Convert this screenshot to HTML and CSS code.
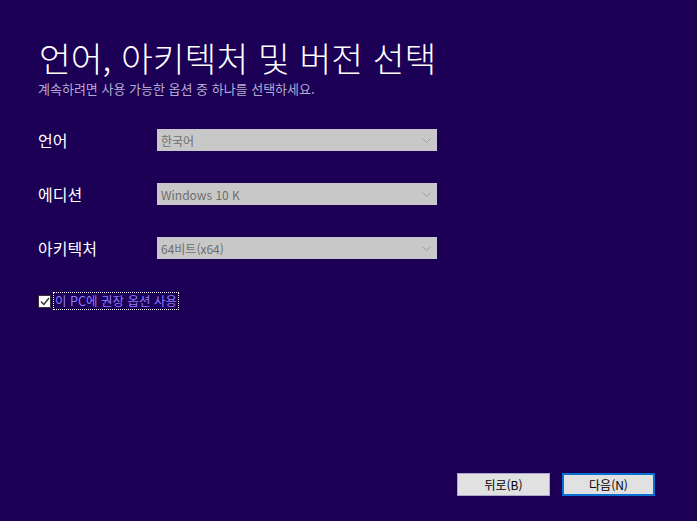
FILE: index.html
```html
<!DOCTYPE html>
<html lang="ko">
<head>
    <meta charset="UTF-8">
    <title>Windows 10 설치 프로그램</title>
    <link rel="stylesheet" href="styles.css">
</head>
<body>
    <div class="page">
        <div class="header">
            <h1>언어, 아키텍처 및 버전 선택</h1>
            <p class="subtitle">계속하려면 사용 가능한 옵션 중 하나를 선택하세요.</p>
        </div>
        <div class="options">
            <div class="row">
                <span class="label">언어</span>
                <div class="select"><span>한국어</span><svg class="chev" width="9" height="5" viewBox="0 0 9 5"><path d="M0.5 0.5 L4.5 4.5 L8.5 0.5" fill="none" stroke="#9e9e9e" stroke-width="1"/></svg></div>
            </div>
            <div class="row">
                <span class="label">에디션</span>
                <div class="select"><span>Windows 10 K</span><svg class="chev" width="9" height="5" viewBox="0 0 9 5"><path d="M0.5 0.5 L4.5 4.5 L8.5 0.5" fill="none" stroke="#9e9e9e" stroke-width="1"/></svg></div>
            </div>
            <div class="row">
                <span class="label">아키텍처</span>
                <div class="select"><span>64비트(x64)</span><svg class="chev" width="9" height="5" viewBox="0 0 9 5"><path d="M0.5 0.5 L4.5 4.5 L8.5 0.5" fill="none" stroke="#9e9e9e" stroke-width="1"/></svg></div>
            </div>
        </div>
        <div class="check-row">
            <span class="checkbox"><svg width="10" height="9" viewBox="0 0 10 9"><path d="M1 4.5 L3.8 7.5 L9 1" fill="none" stroke="#333" stroke-width="1.4"/></svg></span>
            <span class="check-label">이 PC에 권장 옵션 사용</span>
        </div>
        <div class="footer">
            <button class="btn">뒤로(B)</button>
            <button class="btn btn-default">다음(N)</button>
        </div>
    </div>
</body>
</html>
```

FILE: styles.css
```css
html, body { margin: 0; height: 100%; }
body {
    background-color: #1b0056;
    color: #ffffff;
    font-family: "Noto Sans CJK KR", "Noto Sans", sans-serif;
}
.page {
    height: 100%;
    box-sizing: border-box;
    display: flex;
    flex-direction: column;
    padding: 37px 42px 25px 38px;
}
h1 {
    margin: 0 0 0 1px;
    font-size: 34.6px;
    font-weight: 300;
    line-height: 40px;
    letter-spacing: 0;
}
.subtitle {
    margin: 3px 0 0 0;
    font-size: 13px;
    line-height: 17px;
    color: #b4acd0;
}
.options {
    margin-top: 31px;
    display: flex;
    flex-direction: column;
    gap: 32px;
}
.row {
    display: grid;
    grid-template-columns: 119px 280px;
    align-items: center;
    height: 22px;
}
.label { font-size: 16px; }
.select {
    height: 22px;
    background-color: #c8c8c8;
    color: #6e6e6e;
    font-size: 12px;
    display: flex;
    align-items: center;
    justify-content: space-between;
    padding: 0 5px 0 4px;
}
.select .chev { margin-right: 1px; }
.check-row {
    margin-top: 34px;
    display: flex;
    align-items: center;
    height: 18px;
}
.checkbox {
    width: 11px;
    height: 11px;
    background-color: #ffffff;
    border: 1px solid #333333;
    display: flex;
    align-items: center;
    justify-content: center;
    margin-top: 1px;
}
.check-label {
    margin-left: 2px;
    padding: 0 1px;
    border: 1px dotted #ffffff;
    color: #8f7cff;
    font-size: 12.5px;
    line-height: 16px;
}
.footer {
    margin-top: auto;
    display: flex;
    justify-content: flex-end;
    gap: 12px;
}
.btn {
    width: 93px;
    height: 23px;
    background-color: #e1e1e1;
    border: 1px solid #aca6c8;
    font-family: "Noto Sans CJK KR", "Noto Sans", sans-serif;
    font-size: 12px;
    color: #000000;
    padding: 0;
}
.btn-default { border: 2px solid #0a6fd3; }
```
